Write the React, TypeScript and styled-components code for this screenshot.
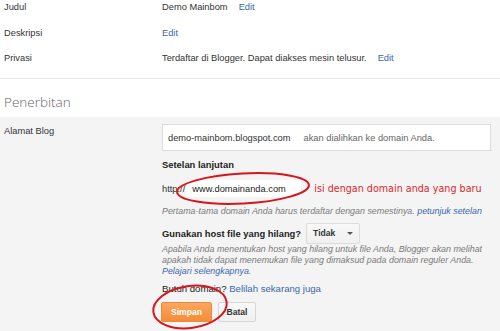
import React from "react";
import styled, { createGlobalStyle } from "styled-components";

const GlobalStyle = createGlobalStyle`
    html, body {
        margin: 0;
        padding: 0;
        background: #ffffff;
    }
    body {
        font-family: "Liberation Sans", Arial, sans-serif;
        font-size: 9.3px;
        color: #333333;
    }
`;

const Page = styled.div`
    position: relative;
    width: 500px;
    height: 331px;
    overflow: hidden;
    background: #ffffff;
`;

const InfoList = styled.div`
    padding-left: 4px;
    padding-bottom: 1.5px;
    border-bottom: 1px solid #e6e6e6;
`;

const InfoRow = styled.div`
    display: grid;
    grid-template-columns: 158px 1fr;
    height: 25.5px;
    line-height: 14px;
`;

const Label = styled.div`
    color: #333333;
`;

const Value = styled.div`
    display: flex;
    gap: 11px;
    color: #333333;
`;

const Link = styled.a<{ italic?: boolean }>`
    color: #3a68a8;
    text-decoration: none;
    font-style: ${(p) => (p.italic ? "italic" : "normal")};
    cursor: pointer;
`;

const SectionTitle = styled.h2`
    margin: 0;
    padding: 13px 0 5px 4px;
    font-family: "Open Sans", sans-serif;
    font-weight: 300;
    font-size: 13.5px;
    line-height: 20px;
    color: #666666;
`;

const Panel = styled.div`
    display: grid;
    grid-template-columns: 158px 1fr;
    padding: 7px 9px 20px 4px;
    background: #f4f4f4;
    min-height: 214px;
`;

const PanelLabel = styled.div`
    line-height: 14px;
    color: #333333;
`;

const Fields = styled.div`
    display: flex;
    flex-direction: column;
`;

const AddressBox = styled.div`
    display: flex;
    align-items: center;
    gap: 13px;
    height: 25px;
    padding: 0 5px;
    background: #ffffff;
    border: 1px solid #dcdcdc;
    color: #333333;
`;

const Hint = styled.span`
    color: #666666;
`;

const SubHeading = styled.div`
    margin-top: 7px;
    font-weight: bold;
    font-size: 9.4px;
    line-height: 14px;
    color: #222222;
`;

const DomainRow = styled.div`
    display: flex;
    align-items: center;
    gap: 1px;
    margin-top: 8px;
    height: 17px;
`;

const DomainInput = styled.div`
    display: flex;
    align-items: center;
    width: 108px;
    height: 15px;
    padding: 0 0 0 5px;
    background: #ffffff;
    border: 1px solid #ffffff;
    color: #222222;
`;

const Note = styled.span`
    margin-left: 12px;
    font-family: "DejaVu Sans", Verdana, sans-serif;
    font-size: 9.6px;
    color: #e0262a;
    white-space: nowrap;
`;

const Help = styled.div<{ top?: number; lh?: number }>`
    margin-top: ${(p) => p.top ?? 0}px;
    font-style: italic;
    font-size: 8.9px;
    line-height: ${(p) => p.lh ?? 11}px;
    color: #7a7a7a;
    white-space: nowrap;
`;

const HostRow = styled.div`
    display: flex;
    align-items: center;
    gap: 5px;
    margin-top: 5px;
    height: 20px;
`;

const HostLabel = styled.span`
    font-weight: bold;
    font-size: 9.4px;
    color: #222222;
`;

const Select = styled.div`
    display: flex;
    align-items: center;
    justify-content: space-between;
    width: 40px;
    height: 19px;
    padding: 0 6px;
    background: linear-gradient(#f8f8f8, #f0f0f0);
    border: 1px solid #dcdcdc;
    border-radius: 2px;
    font-weight: bold;
    font-size: 8.6px;
    color: #333333;
`;

const Caret = styled.span`
    width: 0;
    height: 0;
    border-left: 3px solid transparent;
    border-right: 3px solid transparent;
    border-top: 3px solid #555555;
`;

const BuyLine = styled.div`
    margin-top: 5px;
    line-height: 14px;
    font-size: 9.6px;
    color: #222222;
`;

const Actions = styled.div`
    display: flex;
    gap: 6px;
    margin-top: 6.5px;
    margin-left: -1px;
`;

const Button = styled.button<{ primary?: boolean }>`
    width: ${(p) => (p.primary ? 51 : 38)}px;
    height: 20px;
    padding: 0;
    border: 1px solid ${(p) => (p.primary ? "#e98a3c" : "#d6d6d6")};
    border-radius: 2px;
    background: ${(p) =>
        p.primary
            ? "linear-gradient(#fba65f, #f58c37)"
            : "linear-gradient(#f8f8f8, #f0f0f0)"};
    color: ${(p) => (p.primary ? "#ffffff" : "#333333")};
    font-family: "Liberation Sans", Arial, sans-serif;
    font-weight: bold;
    font-size: 8.6px;
    cursor: pointer;
`;

const Marks = styled.svg`
    position: absolute;
    left: 0;
    top: 0;
    pointer-events: none;
`;

const App: React.FC = () => {
    const info = [
        { label: "Judul", text: "Demo Mainbom" },
        { label: "Deskripsi", text: "" },
        { label: "Privasi", text: "Terdaftar di Blogger. Dapat diakses mesin telusur." },
    ];

    return (
        <Page>
            <GlobalStyle />
            <InfoList>
                {info.map((row) => (
                    <InfoRow key={row.label}>
                        <Label>{row.label}</Label>
                        <Value>
                            {row.text && <span>{row.text}</span>}
                            <Link>Edit</Link>
                        </Value>
                    </InfoRow>
                ))}
            </InfoList>

            <SectionTitle>Penerbitan</SectionTitle>

            <Panel>
                <PanelLabel>Alamat Blog</PanelLabel>
                <Fields>
                    <AddressBox>
                        <span>demo-mainbom.blogspot.com</span>
                        <Hint>akan dialihkan ke domain Anda.</Hint>
                    </AddressBox>

                    <SubHeading>Setelan lanjutan</SubHeading>

                    <DomainRow>
                        <span>http://</span>
                        <DomainInput>www.domainanda.com</DomainInput>
                        <Note>isi dengan domain anda yang baru</Note>
                    </DomainRow>

                    <Help top={7} lh={14}>
                        Pertama-tama domain Anda harus terdaftar dengan semestinya.{" "}
                        <Link italic>petunjuk setelan</Link>
                    </Help>

                    <HostRow>
                        <HostLabel>Gunakan host file yang hilang?</HostLabel>
                        <Select>
                            Tidak <Caret />
                        </Select>
                    </HostRow>

                    <Help top={0.5}>
                        Apabila Anda menentukan host yang hilang untuk file Anda, Blogger akan melihat
                    </Help>
                    <Help>
                        apakah tidak dapat menemukan file yang dimaksud pada domain reguler Anda.
                    </Help>
                    <Help>
                        <Link italic>Pelajari selengkapnya</Link>.
                    </Help>

                    <BuyLine>
                        Butuh domain? <Link>Belilah sekarang juga</Link>
                    </BuyLine>

                    <Actions>
                        <Button primary>Simpan</Button>
                        <Button>Batal</Button>
                    </Actions>
                </Fields>
            </Panel>

            <Marks width="500" height="331" viewBox="0 0 500 331">
                <ellipse
                    cx="243"
                    cy="188.5"
                    rx="66"
                    ry="15"
                    transform="rotate(-3 243 188.5)"
                    fill="none"
                    stroke="#d8141c"
                    strokeWidth="2"
                />
                <ellipse
                    cx="190"
                    cy="307"
                    rx="37"
                    ry="21"
                    transform="rotate(-8 190 307)"
                    fill="none"
                    stroke="#d8141c"
                    strokeWidth="2"
                />
            </Marks>
        </Page>
    );
};

export default App;
